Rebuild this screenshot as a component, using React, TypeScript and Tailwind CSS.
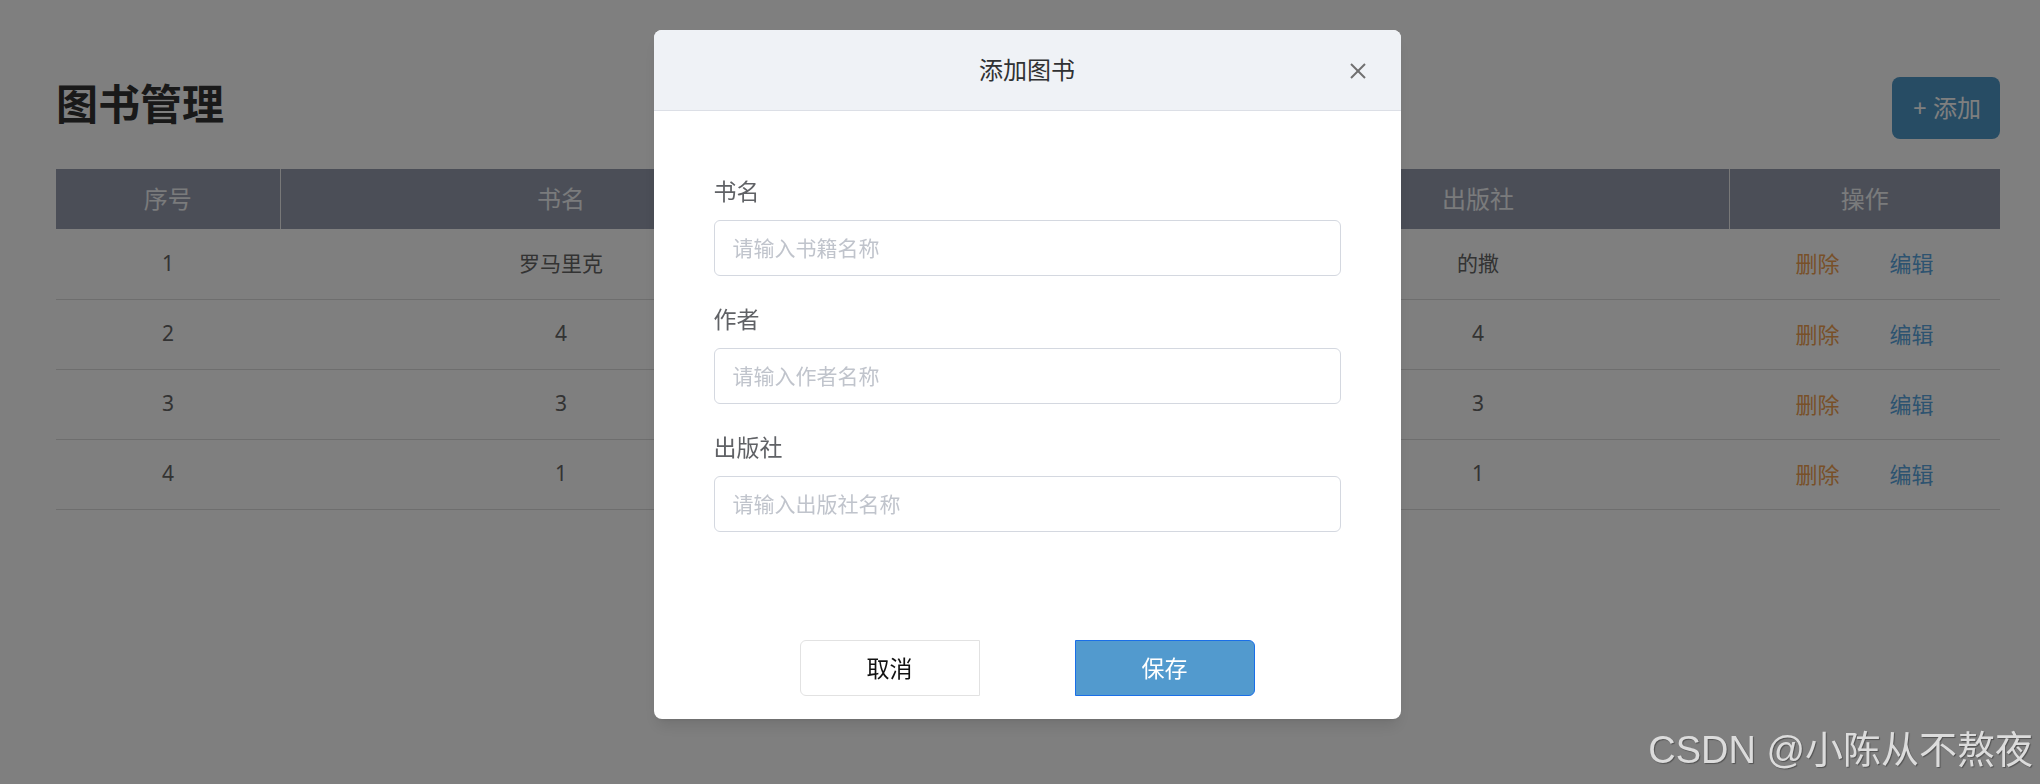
import { useState } from "react";

const font = "font-['Noto_Sans','Noto_Sans_CJK_SC',sans-serif]";

const books = [
  { id: 1, name: "罗马里克", author: "的撒", publisher: "的撒" },
  { id: 2, name: "4", author: "4", publisher: "4" },
  { id: 3, name: "3", author: "3", publisher: "3" },
  { id: 4, name: "1", author: "1", publisher: "1" },
];

function BookTable() {
  return (
    <table className="mt-[30px] w-full table-fixed border-collapse">
      <colgroup>
        <col className="w-[224px]" />
        <col className="w-[562px]" />
        <col className="w-[385px]" />
        <col className="w-[502px]" />
        <col className="w-[271px]" />
      </colgroup>
      <thead>
        <tr className="h-[60px] bg-[#969cae] text-[24px] font-normal text-[#f4f6f8]">
          <th className="border-r border-[#f0f0f0] font-normal">序号</th>
          <th className="border-r border-[#f0f0f0] font-normal">书名</th>
          <th className="border-r border-[#f0f0f0] font-normal">作者</th>
          <th className="border-r border-[#f0f0f0] font-normal">出版社</th>
          <th className="font-normal">操作</th>
        </tr>
      </thead>
      <tbody>
        {books.map((book) => (
          <tr key={book.id} className="h-[70px] border-b border-[#dcdcdc] text-center text-[21px] text-[#666]">
            <td>{book.id}</td>
            <td>{book.name}</td>
            <td>{book.author}</td>
            <td>{book.publisher}</td>
            <td>
              <div className="flex justify-center gap-[50px] text-[22px]">
                <span className="text-[#f0a050]">删除</span>
                <span className="text-[#5aa6e0]">编辑</span>
              </div>
            </td>
          </tr>
        ))}
      </tbody>
    </table>
  );
}

function Field({ label, placeholder, first }: { label: string; placeholder: string; first?: boolean }) {
  return (
    <div className={first ? "" : "mt-[28px]"}>
      <div className="mb-[14px] h-[30px] text-[23px] leading-[30px] text-[#606266]">{label}</div>
      <input
        className="h-[56px] w-full rounded-[6px] border border-[#d4d8e0] px-[18px] text-[21px] text-[#606266] outline-none placeholder:text-[#c0c4cc]"
        placeholder={placeholder}
      />
    </div>
  );
}

function AddBookDialog() {
  return (
    <div className="fixed inset-0 flex items-start justify-center bg-black/50 pt-[30px]">
      <div className="ml-[14px] flex h-[689px] w-[747px] flex-col rounded-[8px] bg-white shadow-lg">
        <div className="relative flex h-[81px] items-center justify-center rounded-t-[8px] border-b border-[#dcdfe6] bg-[#eff2f6]">
          <span className="text-[24px] text-[#303133]">添加图书</span>
          <button className="absolute right-[29px] top-[27px] text-[#707070]">
            <svg width="28" height="28" viewBox="0 0 24 24" fill="none" stroke="currentColor" strokeWidth="1.7">
              <path d="M18 6 6 18" />
              <path d="m6 6 12 12" />
            </svg>
          </button>
        </div>
        <div className="flex-1 px-[60px] pt-[65px]">
          <Field label="书名" placeholder="请输入书籍名称" first />
          <Field label="作者" placeholder="请输入作者名称" />
          <Field label="出版社" placeholder="请输入出版社名称" />
        </div>
        <div className="flex justify-center gap-[95px] pb-[23px]">
          <button className="h-[56px] w-[180px] rounded-l-[6px] border border-[#e2e2e2] bg-white text-[23px] text-[#111]">
            取消
          </button>
          <button className="h-[56px] w-[180px] rounded-r-[6px] border border-[#1a6fe8] bg-[#529ace] text-[23px] text-white">
            保存
          </button>
        </div>
      </div>
    </div>
  );
}

export default function App() {
  const [open] = useState(true);

  return (
    <div className={`relative h-[784px] w-full overflow-hidden bg-white ${font}`}>
      <div className="pl-[56px] pr-[40px] pt-[77px]">
        <div className="flex items-center justify-between">
          <h1 className="mb-[8px] text-[42px] font-bold leading-none text-[#333]">图书管理</h1>
          <button className="h-[62px] rounded-[8px] bg-[#4e98c8] pl-[21px] pr-[19px] text-[24px] text-white">
            + 添加
          </button>
        </div>
        <BookTable />
      </div>

      {open && <AddBookDialog />}

      <div className="absolute bottom-[15px] right-[7px] font-['Liberation_Sans','Noto_Sans_CJK_SC',sans-serif] text-[38px] leading-none text-[#dcdcdc] [text-shadow:1px_1px_1px_rgba(0,0,0,0.35)]">
        CSDN @小陈从不熬夜
      </div>
    </div>
  );
}
